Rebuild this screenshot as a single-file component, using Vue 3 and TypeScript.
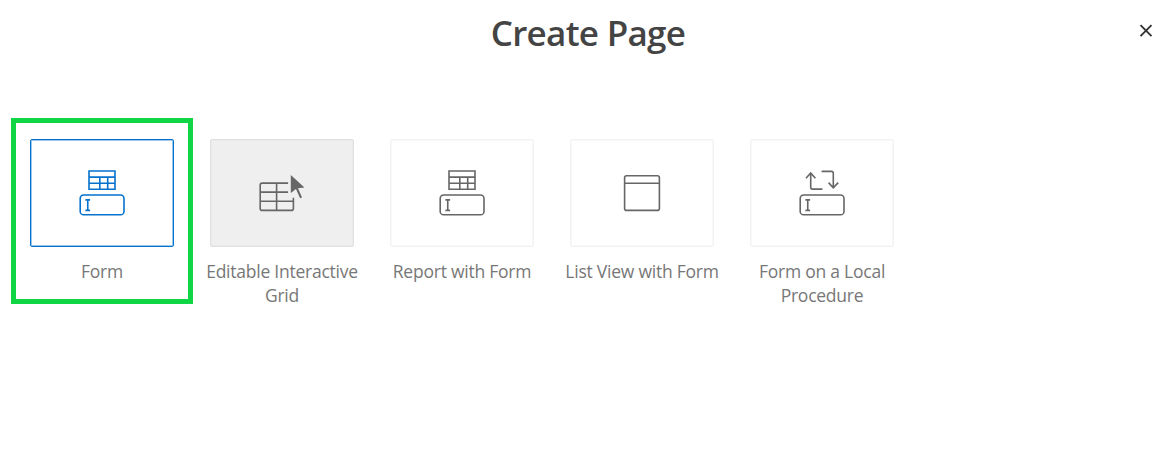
<script setup lang="ts">
type IconName = 'form' | 'grid' | 'list' | 'procedure'

interface PageOption {
  label: string[]
  icon: IconName
  state?: 'selected' | 'hovered'
}

const options: PageOption[] = [
  { label: ['Form'], icon: 'form', state: 'selected' },
  { label: ['Editable Interactive', 'Grid'], icon: 'grid', state: 'hovered' },
  { label: ['Report with Form'], icon: 'form' },
  { label: ['List View with Form'], icon: 'list' },
  { label: ['Form on a Local', 'Procedure'], icon: 'procedure' },
]
</script>

<template>
  <main class="dialog">
    <header class="header">
      <h1 class="title">Create Page</h1>
      <button class="close" type="button" aria-label="Close">
        <svg width="14" height="14" viewBox="0 0 14 14">
          <path d="M1.5 1.2 12.5 12.2M12.5 1.2 1.5 12.2" />
        </svg>
      </button>
    </header>
    <ul class="options">
      <li v-for="option in options" :key="option.label[0]" class="option" :class="option.state">
        <div class="card">
          <svg class="icon" width="64" height="64" viewBox="0 1 64 64">
            <g v-if="option.icon === 'form'">
              <path d="M19 11H45V29.2H19ZM19 17.1H45M19 23.3H45M29.8 17.1V29.2M37.7 17.1V29.2" />
            </g>
            <g v-if="option.icon === 'procedure'">
              <path d="M20.7 13V27.2Q20.7 29.1 22.6 29.1H32.4M16 18.3L20.7 13L25.4 18.3" />
              <path d="M31.6 11.4H41.4Q43.3 11.4 43.3 13.3V27.6M38.6 22.6L43.3 27.8L48.2 22.6" />
            </g>
            <g v-if="option.icon === 'form' || option.icon === 'procedure'">
              <rect x="10.2" y="35" width="43.8" height="19.8" rx="3.4" />
              <path d="M15.4 39.9H20.1M15.4 50.4H20.1M17.75 39.9V50.4" />
            </g>
            <g v-if="option.icon === 'grid'">
              <path d="M38.1 23.1H12.2Q10.2 23.1 10.2 25.1V48.4Q10.2 50.4 12.2 50.4H41.4Q43.4 50.4 43.4 48.4V37.7" />
              <path d="M10.2 32.1H38.1M10.2 41.3H43.4M26.6 23.1V50.4" />
              <path class="pointer" d="M40.8 15L54.4 27.5L48 28.2L52 37.5L50.1 38.3L46 29L40.8 33Z" />
            </g>
            <g v-if="option.icon === 'list'">
              <rect x="14.6" y="15.7" width="34.8" height="34.7" rx="2" />
              <path d="M14.6 23.3H49.4" />
            </g>
          </svg>
        </div>
        <p class="label">
          <span v-for="line in option.label" :key="line">{{ line }}</span>
        </p>
      </li>
    </ul>
  </main>
</template>

<style>
body {
  margin: 0;
  background: #fff;
}
</style>

<style scoped>
.dialog {
  box-sizing: border-box;
  width: 1167px;
  height: 460px;
  overflow: hidden;
  background: #fff;
  font-family: "Open Sans", "Noto Sans", sans-serif;
}
.header {
  display: grid;
  grid-template-columns: 40px 1fr 40px;
  height: 118px;
  align-items: start;
}
.title {
  grid-column: 2;
  margin: 9px 0 0 9px;
  text-align: center;
  font-size: 35px;
  line-height: 48px;
  font-weight: 600;
  letter-spacing: -0.7px;
  color: #444;
  white-space: nowrap;
}
.close {
  margin: 24px 0 0 12px;
  padding: 0;
  border: 0;
  width: 14px;
  height: 14px;
  background: none;
  line-height: 0;
}
.close path {
  fill: none;
  stroke: #333;
  stroke-width: 1.9;
}
.options {
  display: flex;
  margin: 0;
  padding: 0 0 0 12px;
  list-style: none;
}
.option {
  position: relative;
  display: flex;
  flex-direction: column;
  align-items: center;
  width: 180px;
  padding-top: 21px;
  color: #666;
}
.option.selected::after {
  content: "";
  position: absolute;
  inset: 0 auto auto -1px;
  box-sizing: border-box;
  width: 182px;
  height: 186px;
  border: 5px solid #10d545;
}
.card {
  display: flex;
  align-items: center;
  justify-content: center;
  box-sizing: border-box;
  width: 144px;
  height: 108px;
  border: 1px solid #f2f2f2;
  border-radius: 2px;
  box-shadow: inset 0 0 0 1px #f9f9f9;
}
.selected .card {
  color: #0572ce;
  border-color: #0572ce;
  box-shadow: inset 0 0 0 1px #9bc7eb;
}
.hovered .card {
  background: #efefef;
  border-color: #e0e0e0;
  box-shadow: inset 0 0 0 1px #ebebeb;
}
.icon {
  display: block;
  fill: none;
  stroke: currentColor;
  stroke-width: 1.6;
}
.icon .pointer {
  fill: currentColor;
  stroke: none;
}
.label {
  display: flex;
  flex-direction: column;
  align-items: center;
  margin: 12px 0 0;
  font-size: 17.5px;
  line-height: 24px;
  letter-spacing: -0.24px;
  color: #777;
  white-space: nowrap;
}
</style>
